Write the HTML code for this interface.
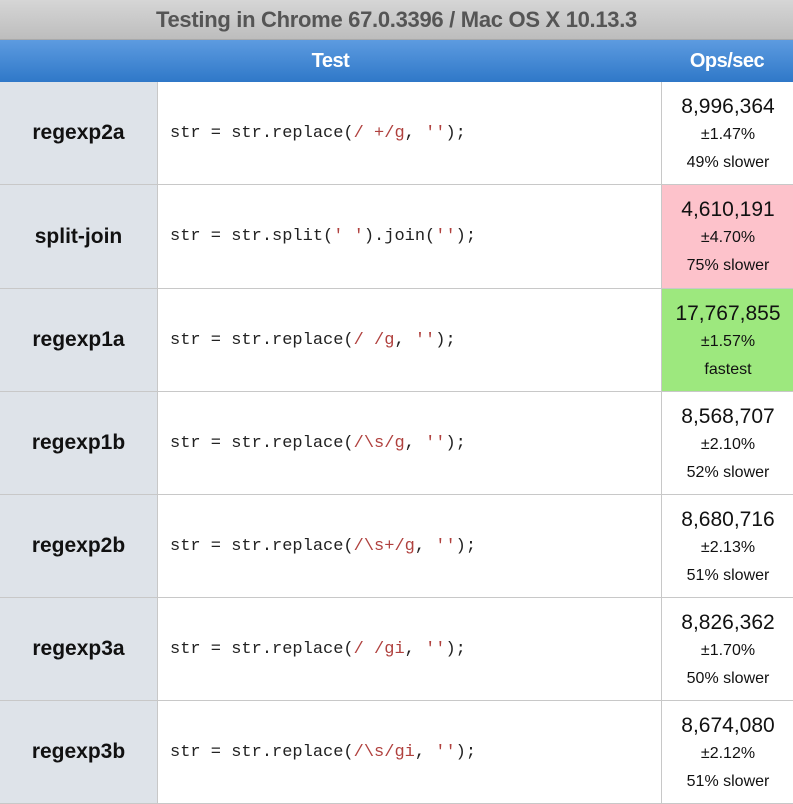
<!DOCTYPE html>
<html><head><style>
body{margin:0;width:793px;height:802px;overflow:hidden;background:#fff;font-family:"Liberation Sans",sans-serif}
.t{position:absolute;left:0;top:0;width:793px;height:40px;background:linear-gradient(#d6d6d6,#bdbdbd);color:#555;font-weight:bold;font-size:22px;text-align:center;line-height:40px;letter-spacing:-0.3px;border-bottom:1px solid #a9a9a9;box-sizing:border-box}
.h{position:absolute;top:40px;height:42px;background:linear-gradient(#5d9be0,#2f78c8);color:#fff;font-weight:bold;font-size:20px;line-height:42px;text-align:center;letter-spacing:-0.5px}
.r{position:absolute;left:0;width:793px;border-bottom:1px solid #c8c8c8;box-sizing:border-box}
.n{position:absolute;left:0;top:0;bottom:0;width:157px;background:#dee3e9;border-right:1px solid #c8c8c8;font-weight:bold;font-size:21px;display:flex;align-items:center;justify-content:center;color:#111}
.c{position:absolute;left:170px;top:0;bottom:0;display:flex;align-items:center;font-family:"Liberation Mono",monospace;font-size:17px;color:#222;white-space:pre}
.c i{font-style:normal;color:#b0413e}
.o{position:absolute;left:661px;top:0;bottom:0;width:132px;border-left:1px solid #c8c8c8;text-align:center;color:#111}
.o b{display:block;font-weight:normal;font-size:21px;margin-top:11px;line-height:27px}
.o s{display:block;text-decoration:none;font-size:16px;line-height:27px;margin-top:1px}
</style></head><body>
<div class="t">Testing in Chrome 67.0.3396 / Mac OS X 10.13.3</div>
<div class="h" style="left:0;width:661px">Test</div>
<div class="h" style="left:661px;width:132px">Ops/sec</div>

<div class="r" style="top:82px;height:103px"><div class="n">regexp2a</div><div class="c"><span>str = str.replace(<i>/ +/g</i>, <i>''</i>);</span></div><div class="o"><b>8,996,364</b><s>±1.47%</s><s>49% slower</s></div></div>
<div class="r" style="top:185px;height:104px"><div class="n">split-join</div><div class="c"><span>str = str.split(<i>' '</i>).join(<i>''</i>);</span></div><div class="o" style="background:#fdc2cb"><b>4,610,191</b><s>±4.70%</s><s>75% slower</s></div></div>
<div class="r" style="top:289px;height:103px"><div class="n">regexp1a</div><div class="c"><span>str = str.replace(<i>/ /g</i>, <i>''</i>);</span></div><div class="o" style="background:#9de87e"><b>17,767,855</b><s>±1.57%</s><s>fastest</s></div></div>
<div class="r" style="top:392px;height:103px"><div class="n">regexp1b</div><div class="c"><span>str = str.replace(<i>/\s/g</i>, <i>''</i>);</span></div><div class="o"><b>8,568,707</b><s>±2.10%</s><s>52% slower</s></div></div>
<div class="r" style="top:495px;height:103px"><div class="n">regexp2b</div><div class="c"><span>str = str.replace(<i>/\s+/g</i>, <i>''</i>);</span></div><div class="o"><b>8,680,716</b><s>±2.13%</s><s>51% slower</s></div></div>
<div class="r" style="top:598px;height:103px"><div class="n">regexp3a</div><div class="c"><span>str = str.replace(<i>/ /gi</i>, <i>''</i>);</span></div><div class="o"><b>8,826,362</b><s>±1.70%</s><s>50% slower</s></div></div>
<div class="r" style="top:701px;height:103px"><div class="n">regexp3b</div><div class="c"><span>str = str.replace(<i>/\s/gi</i>, <i>''</i>);</span></div><div class="o"><b>8,674,080</b><s>±2.12%</s><s>51% slower</s></div></div>
</body></html>
